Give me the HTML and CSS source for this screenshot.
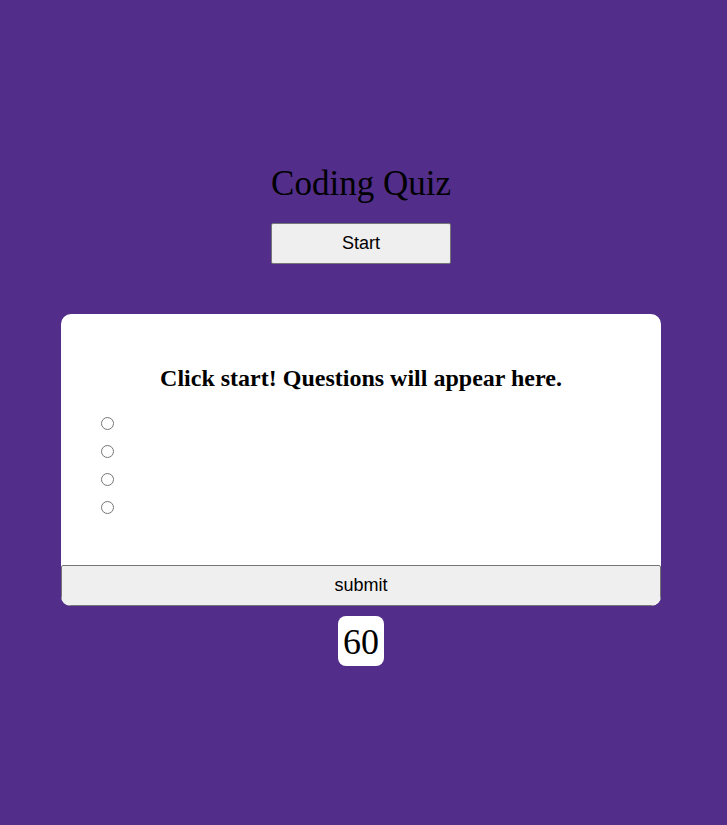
FILE: index.html
```html
<!DOCTYPE html>
<html>
<head>
<meta charset="utf-8">
<link rel="stylesheet" href="styles.css">
</head>
<body>
<main class="page">
  <h1 class="title">Coding Quiz</h1>
  <button class="start-btn">Start</button>
  <section class="card">
    <h2 class="question">Click start! Questions will appear here.</h2>
    <div class="answers">
      <label class="answer"><input type="radio" name="a"></label>
      <label class="answer"><input type="radio" name="a"></label>
      <label class="answer"><input type="radio" name="a"></label>
      <label class="answer"><input type="radio" name="a"></label>
    </div>
    <button class="submit-btn">submit</button>
  </section>
  <div class="timer">60</div>
</main>
</body>
</html>
```
FILE: styles.css
```css
html, body {
  margin: 0;
  padding: 0;
  background: #522e8a;
  height: 100%;
}
.page {
  display: flex;
  flex-direction: column;
  align-items: center;
  padding: 164px 5px 0 0;
  font-family: "Liberation Serif", "Times New Roman", serif;
}
.title {
  margin: 0;
  font-size: 35px;
  font-weight: normal;
  line-height: 40px;
  color: #000;
}
.start-btn {
  margin-top: 19px;
  width: 180px;
  height: 41px;
  background: #efefef;
  border: 1px solid #767676;
  border-radius: 2px;
  font-family: "Liberation Sans", Arial, sans-serif;
  font-size: 18px;
  color: #000;
}
.card {
  margin-top: 50px;
  width: 600px;
  background: #fff;
  border-radius: 10px;
  overflow: hidden;
  display: flex;
  flex-direction: column;
}
.question {
  margin: 49px 0 0;
  text-align: center;
  font-size: 24px;
  font-weight: bold;
  line-height: 30px;
}
.answers {
  display: flex;
  flex-direction: column;
  padding: 16px 0 0 40px;
  height: 112px;
}
.answer {
  height: 28px;
  display: flex;
  align-items: center;
}
.answer input {
  margin: 0;
  width: 13px;
  height: 13px;
}
.submit-btn {
  margin-top: 44px;
  height: 41px;
  width: 100%;
  background: #efefef;
  border: 1px solid #767676;
  border-radius: 2px;
  font-family: "Liberation Sans", Arial, sans-serif;
  font-size: 18px;
  color: #000;
}
.timer {
  margin-top: 10px;
  background: #fff;
  border-radius: 8px;
  padding: 5px 5px 3px;
  font-size: 36px;
  line-height: 42px;
}
```
